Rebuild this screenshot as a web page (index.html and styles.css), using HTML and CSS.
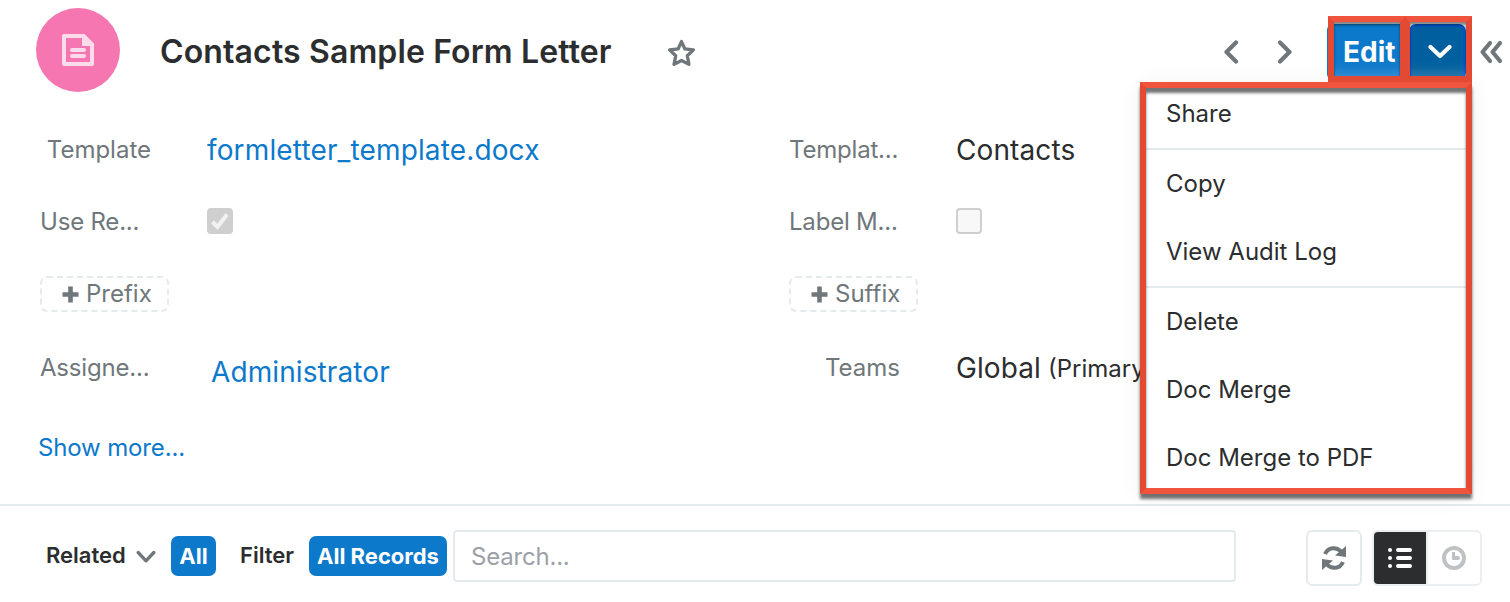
FILE: index.html
```html
<!DOCTYPE html>
<html lang="en">
<head>
<meta charset="utf-8">
<title>Contacts Sample Form Letter</title>
<link rel="stylesheet" href="styles.css">
</head>
<body>
<div class="page">
  <header class="header">
    <div class="avatar">
      <svg width="32" height="32" viewBox="0 0 32 32"><path d="M2 0H22.500L32 9.500V30Q32 32 30 32H2Q0 32 0 30V2Q0 0 2 0ZM4 4V28H28V12H20V4Z" fill="#fcdcea" fill-rule="evenodd"/><path d="M10 16H22M10 22H22" stroke="#fcdcea" stroke-width="4" stroke-linecap="round"/></svg>
    </div>
    <h1 class="title">Contacts Sample Form Letter</h1>
    <svg class="star" width="29" height="29" viewBox="0 0 28 28"><path d="M14 2.500L17.300 9.600L25.500 10.500L19.600 16.200L21.200 24.500L14 20.700L6.800 24.500L8.400 16.200L2.500 10.500L10.700 9.600Z" fill="none" stroke="#6f777b" stroke-width="3.200" stroke-linejoin="round"/></svg>
    <div class="actions">
      <svg class="prev" width="16" height="24" viewBox="0 0 16 24"><path d="M13 2.500L3.500 12L13 21.500" class="nav-line"/></svg>
      <svg class="next" width="16" height="24" viewBox="0 0 16 24"><path d="M3 2.500L12.500 12L3 21.500" class="nav-line"/></svg>
      <button class="edit">Edit</button>
      <button class="toggle"><svg width="24" height="16" viewBox="0 0 24 16"><path d="M2.500 3L12 12L21.500 3" fill="none" stroke="#fff" stroke-width="4.200" stroke-linecap="round" stroke-linejoin="round"/></svg></button>
      <svg class="collapse" width="24" height="24" viewBox="0 0 24 24"><path d="M11 3L3.500 12L11 21M21 3L13.500 12L21 21" class="nav-line"/></svg>
    </div>
  </header>

  <main class="fields">
    <div class="row">
      <span class="label">Template</span><a class="value link file">formletter_template.docx</a>
      <span class="label cut">Templat...</span><span class="value">Contacts</span>
    </div>
    <div class="row">
      <span class="label cut">Use Re...</span>
      <span class="value"><i class="check on"><svg width="20" height="20" viewBox="0 0 20 20"><path d="M2.500 11L7.500 16L17 3.500" fill="none" stroke="#f2f2f2" stroke-width="4"/></svg></i></span>
      <span class="label cut">Label M...</span><span class="value"><i class="check"></i></span>
    </div>
    <div class="row">
      <span class="pill"><svg width="17" height="17" viewBox="0 0 17 17"><path d="M8.500 0.500V16.500M0.500 8.500H16.500" stroke="#6f777b" stroke-width="4.600"/></svg>Prefix</span>
      <span class="value"></span>
      <span class="pill"><svg width="17" height="17" viewBox="0 0 17 17"><path d="M8.500 0.500V16.500M0.500 8.500H16.500" stroke="#6f777b" stroke-width="4.600"/></svg>Suffix</span>
    </div>
    <div class="row tall">
      <span class="label cut">Assigne...</span><a class="value link admin">Administrator</a>
      <span class="label">Teams</span><span class="value teams">Global <small>(Primary)</small></span>
    </div>
    <a class="more">Show more...</a>
  </main>

  <footer class="footer">
    <span class="strong related">Related</span>
    <svg class="caret" width="20" height="14" viewBox="0 0 20 14"><path d="M2.200 2.500L10 10.800L17.800 2.500" fill="none" stroke="#6f777b" stroke-width="3.300" stroke-linecap="round" stroke-linejoin="round"/></svg>
    <span class="tag all">All</span>
    <span class="strong filter">Filter</span>
    <span class="tag records">All Records</span>
    <input class="search" type="text" placeholder="Search...">
    <button class="refresh"><svg width="24" height="24" viewBox="0 0 24 24"><g fill="none" stroke="#6f777b" stroke-width="4"><path d="M3 8C6 1 14.500 0.500 19 5.500"/><path d="M21 16C18 23 9.500 23.500 5 18.500"/></g><path d="M24 0V11L13 9.500ZM0 24V13L11 14.500Z" fill="#6f777b"/></svg></button>
    <div class="views">
      <span class="view active"><svg width="24" height="22" viewBox="0 0 24 22"><path d="M2 3H2.010M2 11H2.010M2 19H2.010M10 3H22M10 11H22M10 19H22" stroke="#fff" stroke-width="4" stroke-linecap="round"/></svg></span>
      <span class="view timeline"><svg width="24" height="24" viewBox="0 0 24 24"><circle cx="12" cy="12" r="10" fill="none" stroke="#bfc2c4" stroke-width="4"/><path d="M10 6H13V10H16A2 2 0 0 1 16 14H11Q10 14 10 13Z" fill="#bfc2c4"/></svg></span>
    </div>
  </footer>

  <nav class="menu">
    <a>Share</a>
    <hr>
    <a>Copy</a>
    <a>View Audit Log</a>
    <hr>
    <a>Delete</a>
    <a>Doc Merge</a>
    <a>Doc Merge to PDF</a>
  </nav>
  <div class="mark mark-edit"></div>
  <div class="mark mark-toggle"></div>
  <div class="mark mark-menu"></div>
</div>
</body>
</html>
```
FILE: styles.css
```css
* { box-sizing: border-box; }
body { margin: 0; background: #fff; font-family: Inter, "Liberation Sans", sans-serif; color: #2b2d2e; }
svg { display: block; flex: none; }
button { font-family: inherit; margin: 0; padding: 0; }
.page { position: relative; width: 1510px; height: 602px; overflow: hidden; display: flex; flex-direction: column; }

.header { height: 114px; padding: 8px 7px 22px 36px; display: flex; align-items: center; }
.avatar { width: 84px; height: 84px; border-radius: 50%; background: #f576b0; display: flex; align-items: center; justify-content: center; }
.title { margin: 4px 0 0 40px; width: 452px; font-size: 32px; line-height: 40px; font-weight: 600; letter-spacing: .13px; white-space: nowrap; }
.star { margin: 6px 0 0 55px; }
.actions { margin-left: auto; margin-top: 3px; height: 56px; display: flex; align-items: center; }
.nav-line { fill: none; stroke: #6f777b; stroke-width: 4.200; stroke-linecap: round; stroke-linejoin: round; }
.prev { margin-right: 38px; }
.next { margin-right: 34px; }
.edit { width: 79px; height: 56px; border: 0; border-radius: 6px 0 0 6px; background: #0c79cb; color: #fff; font-size: 28px; font-weight: 700; text-align: left; padding-left: 16px; }
.toggle { width: 57px; height: 56px; margin: 0 13px 0 3px; border: 3px solid #0056c9; border-radius: 7px; background: #00609f; display: flex; align-items: center; justify-content: center; }
.toggle svg { margin-left: 4px; }

.fields { height: 390px; display: flex; flex-direction: column; }
.row { height: 72px; padding-left: 40px; display: grid; grid-template-columns: 167px 582px 167px 400px; align-items: center; }
.tall { height: 76px; }
.label { width: 111px; font-size: 24px; line-height: 32px; color: #6f777b; text-align: right; white-space: nowrap; }
.label.cut { text-align: left; letter-spacing: -.2px; }
.value { font-size: 28px; line-height: 36px; white-space: nowrap; letter-spacing: .1px; }
.value small { margin-left: -1px; font-size: 24px; letter-spacing: 0; vertical-align: 1px; }
.file { letter-spacing: .14px; }
.teams { padding-top: 1px; }
.link, .more { color: #0c79cb; }
.admin { padding: 8px 0 0 4px; }
.check { display: flex; align-items: center; justify-content: center; width: 26px; height: 26px; margin-bottom: 2px; border: 2px solid #cfcfcf; border-radius: 4px; background: #f8f8f8; }
.check.on { background: #cfcfcf; }
.pill { width: 129px; height: 36px; display: flex; align-items: center; gap: 7px; padding-left: 20px; border: 2px dashed #e5eaed; border-radius: 7px; font-size: 24px; line-height: 32px; color: #6f777b; }
.more { margin: 26px 0 0 38px; font-size: 24px; line-height: 32px; letter-spacing: -.15px; }

.footer { height: 98px; border-top: 2px solid #e5eaed; padding: 4px 28px 0 46px; display: flex; align-items: center; }
.strong { margin-top: -2px; font-size: 22px; line-height: 30px; font-weight: 600; white-space: nowrap; }
.related { width: 90px; }
.caret { margin-top: 2px; }
.tag { height: 40px; line-height: 40px; border-radius: 7px; background: #0c79cb; color: #fff; font-size: 22px; font-weight: 700; text-align: center; white-space: nowrap; }
.all { width: 45px; margin-left: 15px; }
.filter { width: 69px; margin-left: 24px; }
.records { width: 138px; }
.search { width: 783px; height: 52px; margin-left: 6px; padding: 0 16px; border: 2px solid #e5eaed; border-radius: 4px; font: 24px Inter, sans-serif; letter-spacing: -.2px; }
.search::placeholder { color: #9ba1a6; }
.refresh { width: 56px; height: 56px; margin: 4px 0 0 70px; border: 2px solid #e5eaed; border-radius: 6px; background: #fff; display: flex; align-items: center; justify-content: center; }
.views { width: 110px; height: 56px; margin: 4px 0 0 10px; border: 2px solid #eceff1; border-radius: 6px; display: flex; overflow: hidden; }
.view { flex: 1; display: flex; align-items: center; justify-content: center; }
.view.active { flex: 0 0 52px; background: #2b2d2e; }
.timeline { border-left: 2px solid #eceff1; }

.menu { position: absolute; left: 1142px; top: 84px; width: 328px; height: 408px; padding: 0 4px; background: #fff; box-shadow: 0 2px 24px rgba(0, 0, 0, .07); display: flex; flex-direction: column; }
.menu a { height: 68px; line-height: 68px; padding-left: 20px; font-size: 24px; }
.menu a:first-child { height: 64px; line-height: 60px; }
.menu hr { width: 100%; height: 2px; margin: 0; border: 0; background: #e5eaed; flex: none; }
.mark { position: absolute; border: 6px solid #e34a33; border-top-color: #f0543c; border-bottom-color: #f0543c; }
.mark-edit, .mark-toggle { border-bottom-color: #e34a33; box-shadow: inset 0 3px 3px rgba(0, 0, 0, .5), inset 0 -10px 12px -6px rgba(255, 255, 255, .2); }
.mark-edit { left: 1328px; top: 16px; width: 78px; height: 66px; }
.mark-toggle { left: 1404px; top: 16px; width: 68px; height: 66px; }
.mark-menu { left: 1140px; top: 82px; width: 332px; height: 412px; box-shadow: 0 5px 3px rgba(0, 0, 0, .55), inset 0 5px 3px rgba(0, 0, 0, .55); }
```
